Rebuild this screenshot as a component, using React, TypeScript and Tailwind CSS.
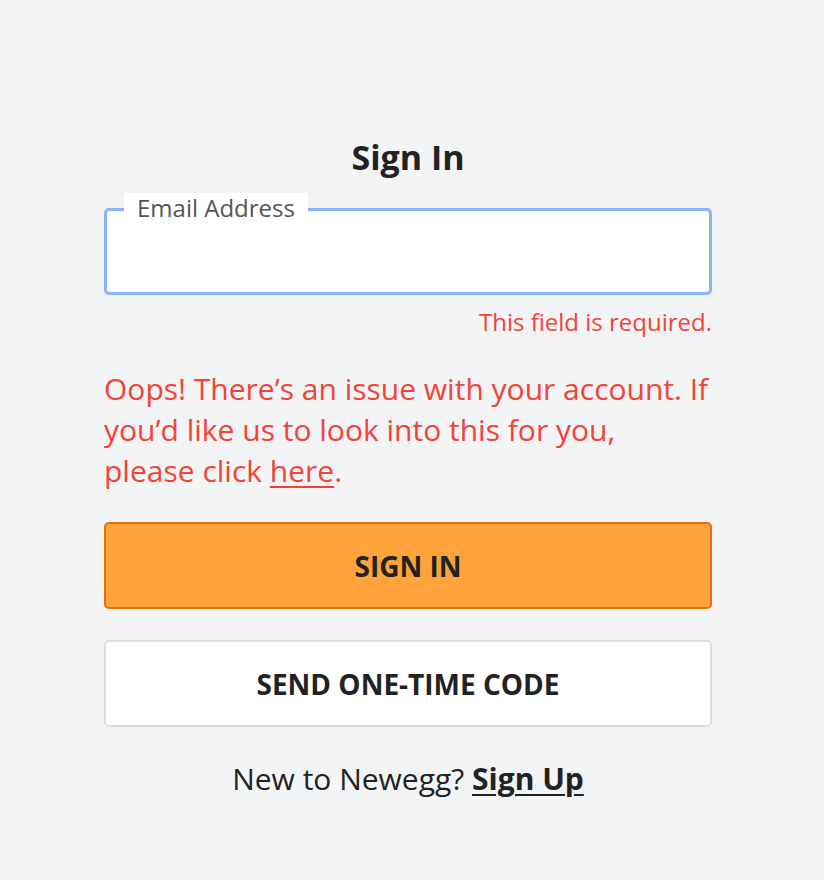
export default function App() {
  return (
    <div className="min-h-[880px] bg-[#f3f4f6] font-['Open_Sans',sans-serif]">
      <div className="ml-[104px] w-[608px] pt-[128px]">
        <h1 className="text-center text-[34px] font-bold leading-[58px] text-[#222]">Sign In</h1>

        {/* Email field */}
        <div className="relative mt-[22px]">
          <input
            type="email"
            className="h-[87px] w-full rounded-[5px] border-[3px] border-[#8ab4f8] bg-white px-4 pt-4 text-[24px] outline-none"
          />
          <span className="absolute left-[20px] top-[-15px] bg-white px-[13px] text-[24px] leading-[30px] text-[#555]">
            Email Address
          </span>
        </div>
        <p className="mt-[11px] text-right text-[24px] leading-[32px] text-[#f44336]">This field is required.</p>

        <p className="mt-[30px] text-[30px] leading-[41px] text-[#f44336]">
          Oops! There’s an issue with your account. If you’d like us to look into this for you, please click{" "}
          <span>
            <a href="#" className="underline decoration-2 underline-offset-[4px]">here</a>.
          </span>
        </p>

        <button className="mt-[31px] h-[87px] w-full rounded-[5px] border-2 border-[#e86f00] bg-[#ffa33a] text-[28px] font-bold text-[#222]">
          SIGN IN
        </button>
        <button className="mt-[31px] h-[87px] w-full rounded-[5px] border-2 border-[#dcdcdc] bg-white text-[28px] font-bold text-[#222]">
          SEND ONE-TIME CODE
        </button>

        <p className="mt-[32px] text-center text-[30px] leading-[40px] text-[#222]">
          New to Newegg?{" "}
          <a href="#" className="font-bold underline decoration-2 underline-offset-[4px]">Sign Up</a>
        </p>
      </div>
    </div>
  );
}
